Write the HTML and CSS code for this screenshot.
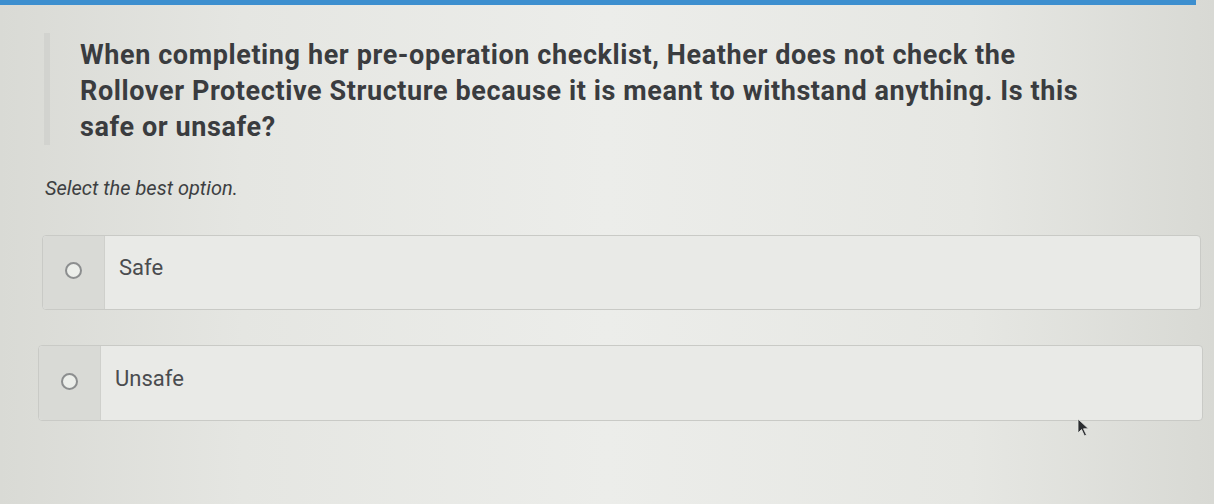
FILE: index.html
```html
<!DOCTYPE html>
<html lang="en">
<head>
    <meta charset="UTF-8">
    <meta name="viewport" content="width=device-width, initial-scale=1.0">
    <title>Question</title>
    <link rel="stylesheet" href="styles.css">
</head>
<body>
    <div class="topbar"></div>

    <div class="question">
        <p>When completing her pre-operation checklist, Heather does not check the Rollover Protective Structure because it is meant to withstand anything. Is this safe or unsafe?</p>
    </div>

    <p class="hint">Select the best option.</p>

    <div class="options">
        <label class="option first">
            <span class="radio-cell"><span class="radio"></span></span>
            <span class="text">Safe</span>
        </label>
        <label class="option second">
            <span class="radio-cell"><span class="radio"></span></span>
            <span class="text">Unsafe</span>
        </label>
    </div>

    <!-- mouse pointer -->
    <svg class="pointer" width="14" height="20" viewBox="0 0 14 20">
        <path d="M1 1 L1 15 L4.5 11.5 L7.5 18 L9.5 17 L6.5 10.8 L11.5 10.8 Z" fill="#2b2d30" stroke="#e9eae6" stroke-width="0.8"/>
    </svg>
</body>
</html>
```

FILE: styles.css
```css
body {
    margin: 0;
    height: 504px;
    overflow: hidden;
    position: relative;
    font-family: Roboto, "Liberation Sans", sans-serif;
    color: #3b3d40;
    background: linear-gradient(90deg, #d9dad5 0%, #e5e6e2 20%, #ecedea 50%, #e6e7e3 80%, #d8d9d4 100%);
}
.topbar {
    height: 5px;
    width: 1196px;
    background: #3d8fcf;
}
.question {
    margin: 28px 0 0 44px;
    padding: 4px 0 0 30px;
    border-left: 6px solid #d2d3cf;
    width: 1025px;
}
.question p {
    margin: 0;
    font-size: 27px;
    font-weight: bold;
    letter-spacing: 0.6px;
    line-height: 36px;
    color: #3a3c3f;
}
.hint {
    margin: 31px 0 0 45px;
    font-size: 20px;
    font-style: italic;
    color: #3d3f42;
}
.options {
    margin-top: 35px;
    display: flex;
    flex-direction: column;
    gap: 35px;
}
.option {
    display: flex;
    align-items: stretch;
    border: 1px solid #c9cac6;
    border-radius: 4px;
    background: #e9eae7;
}
.option.first {
    height: 73px;
    margin: 0 13px 0 42px;
}
.option.second {
    height: 74px;
    margin: 0 11px 0 38px;
}
.radio-cell {
    width: 61px;
    display: flex;
    align-items: center;
    justify-content: center;
    padding-bottom: 4px;
    background: #d9dad6;
    border-right: 1px solid #cfd0cc;
    border-radius: 4px 0 0 4px;
}
.radio {
    width: 13px;
    height: 13px;
    border: 2px solid #8c8e8f;
    border-radius: 50%;
    background: #eceeea;
}
.text {
    display: flex;
    align-items: center;
    padding-left: 14px;
    padding-bottom: 10px;
    font-size: 22px;
    color: #4a4c4f;
}
.pointer {
    position: absolute;
    left: 1077px;
    top: 418px;
}
```
